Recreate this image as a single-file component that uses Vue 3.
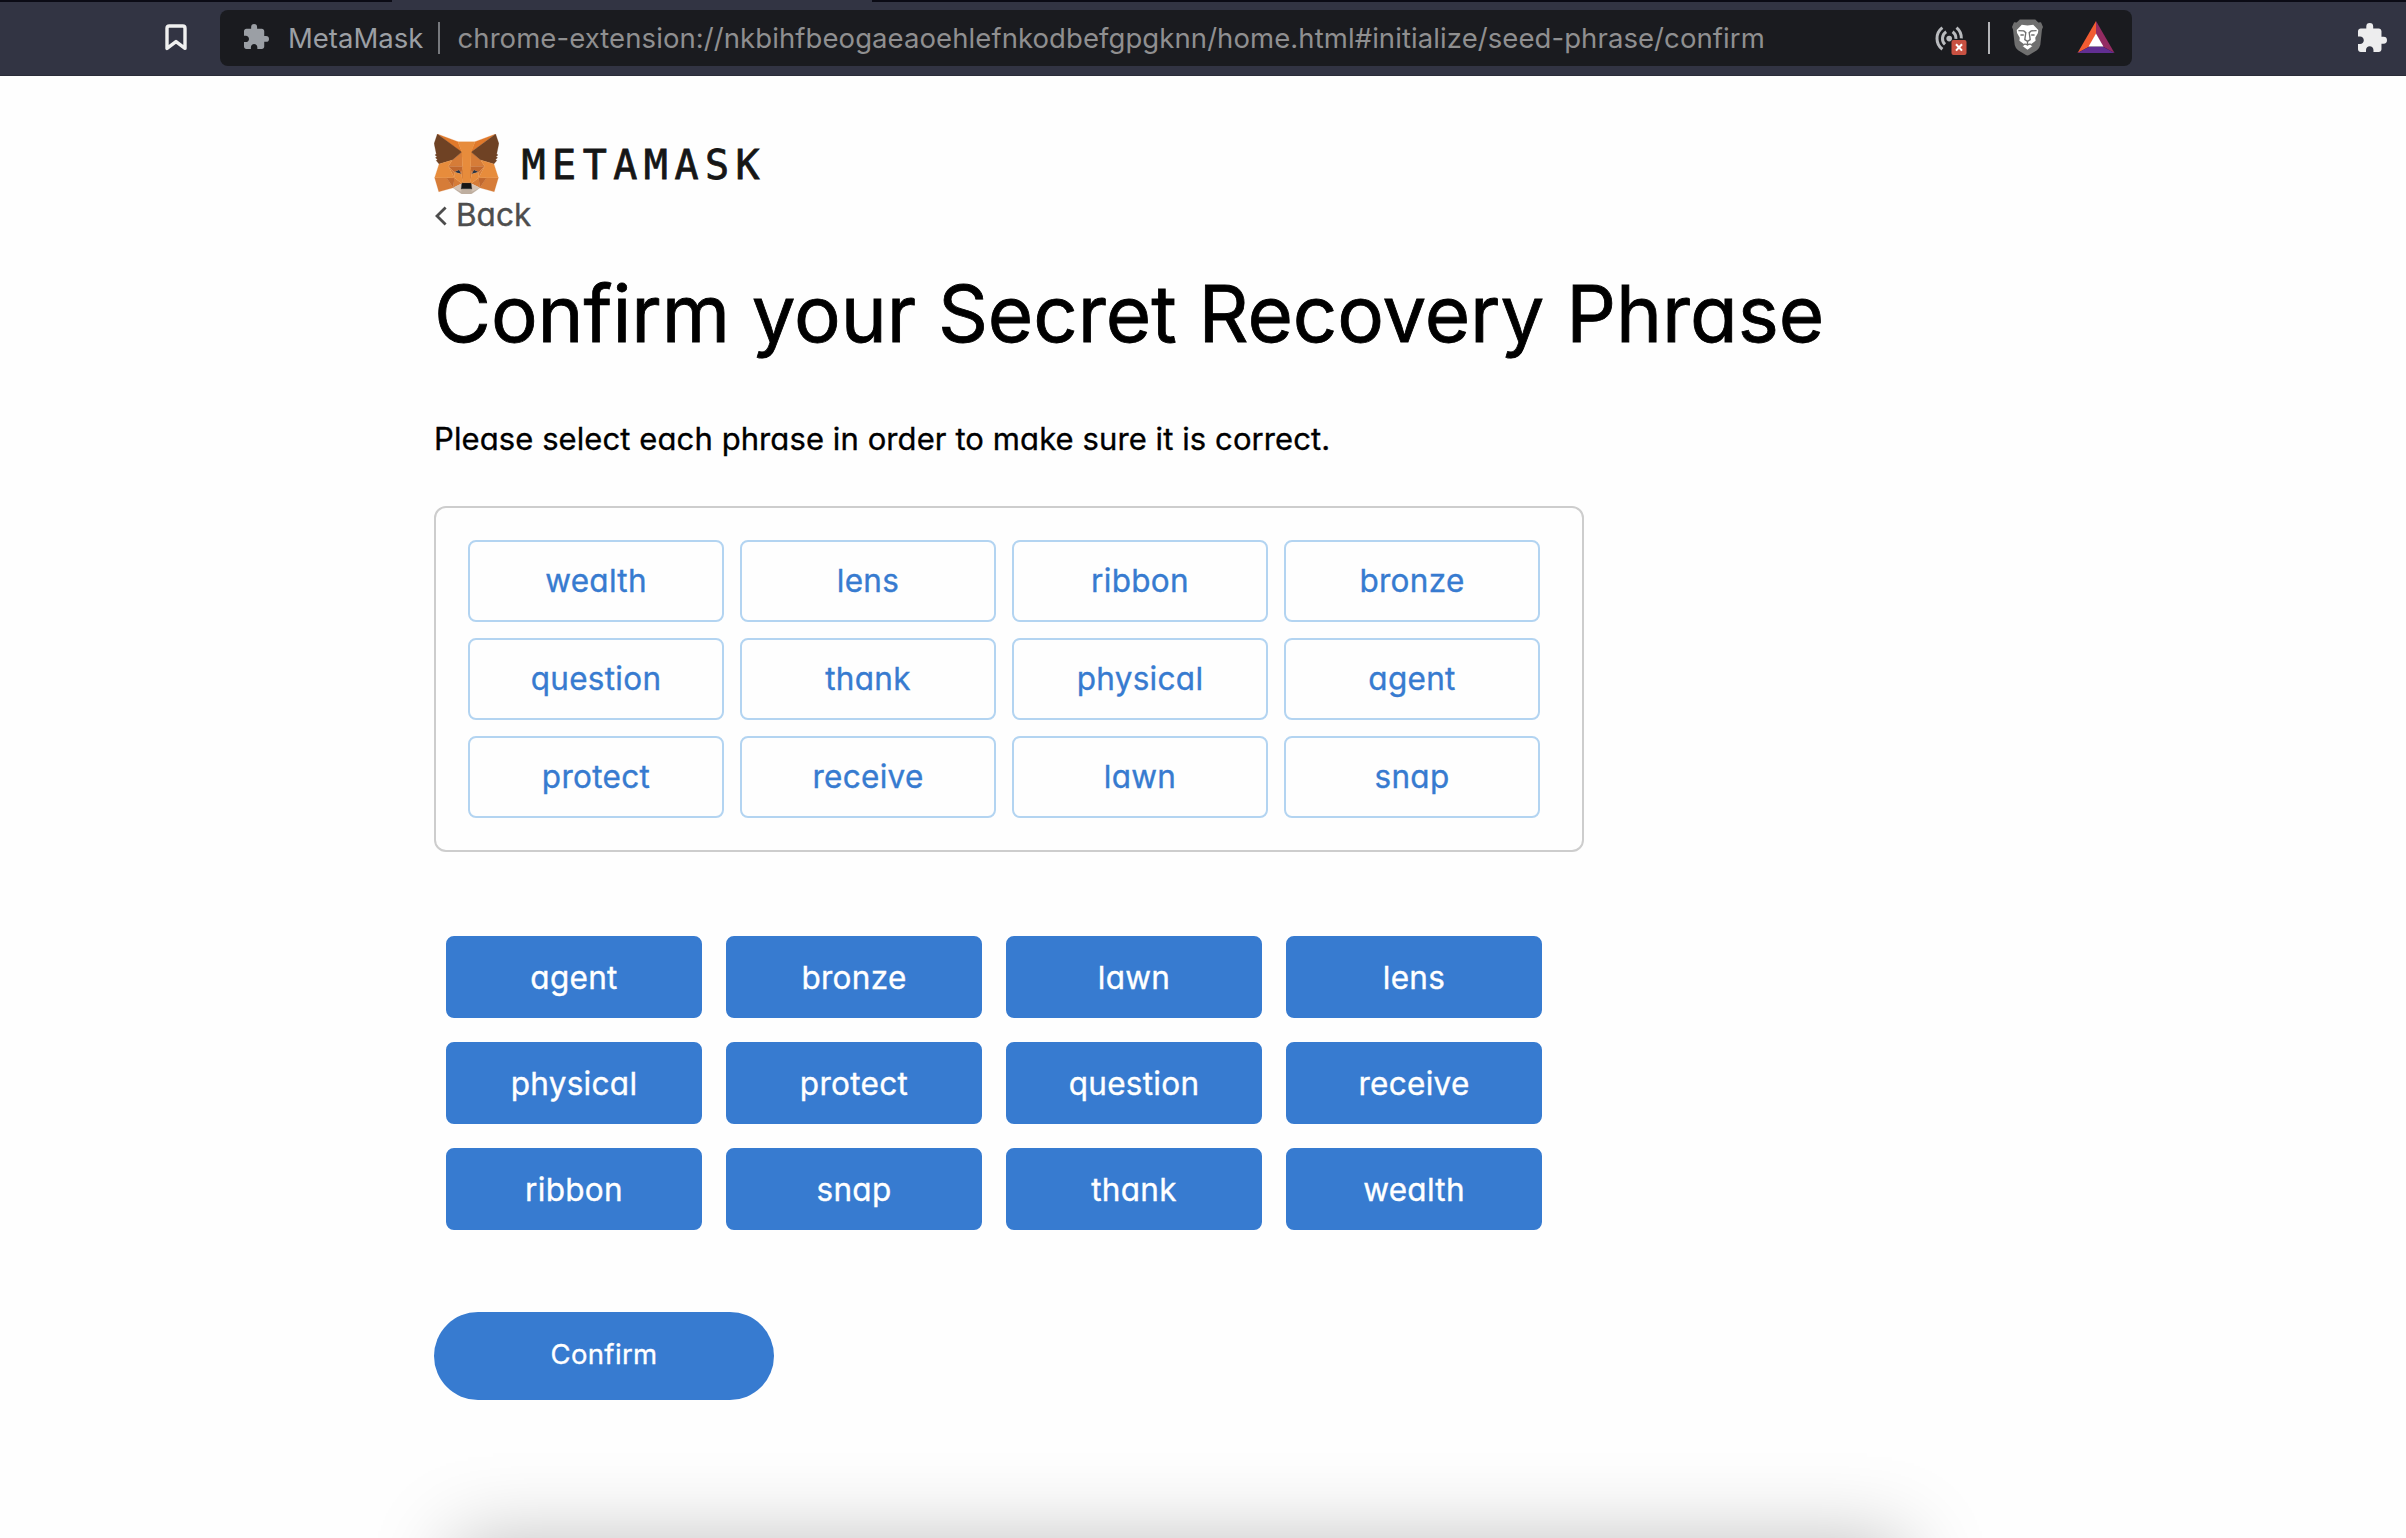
<script setup>
import { ref } from 'vue'

const pageUrl = 'chrome-extension://nkbihfbeogaeaoehlefnkodbefgpgknn/home.html#initialize/seed-phrase/confirm'

const selectedWords = ref([
  'wealth', 'lens', 'ribbon', 'bronze',
  'question', 'thank', 'physical', 'agent',
  'protect', 'receive', 'lawn', 'snap',
])

const sortedWords = ref([
  'agent', 'bronze', 'lawn', 'lens',
  'physical', 'protect', 'question', 'receive',
  'ribbon', 'snap', 'thank', 'wealth',
])

const puzzlePath = 'M20.5 11H19V7c0-1.1-.9-2-2-2h-4V3.5a2.5 2.5 0 0 0-5 0V5H4c-1.1 0-2 .9-2 2v3.8h1.5c1.49 0 2.7 1.21 2.7 2.7S4.99 16.2 3.5 16.2H2V20c0 1.1.9 2 2 2h3.8v-1.5c0-1.49 1.21-2.7 2.7-2.7s2.7 1.21 2.7 2.7V22H17c1.1 0 2-.9 2-2v-4h1.5a2.5 2.5 0 0 0 0-5z'

const foxFacets = [
  ['#e0792b', '274.1,35.5 174.6,109.4 193,65.8'],
  ['#e0792b', '44.4,35.5 143.1,110.1 125.6,65.8'],
  ['#d67c38', '238.3,206.8 211.8,247.4 268.5,263 284.8,207.7'],
  ['#d67c38', '33.9,207.7 50.1,263 106.8,247.4 80.3,206.8'],
  ['#d67c38', '103.6,138.2 87.8,162.1 144.1,164.6 142.1,104.1'],
  ['#d67c38', '214.9,138.2 175.9,103.4 174.6,164.6 230.8,162.1'],
  ['#d67c38', '106.8,247.4 140.6,230.9 111.4,208.1'],
  ['#d67c38', '177.9,230.9 211.8,247.4 207.1,208.1'],
  ['#d5c3b5', '211.8,247.4 177.9,230.9 180.6,253 180.3,262.3'],
  ['#d5c3b5', '106.8,247.4 138.3,262.3 138.1,253 140.6,230.9'],
  ['#263347', '138.8,193.5 110.6,185.2 130.5,176.1'],
  ['#263347', '179.7,193.5 188,176.1 208,185.2'],
  ['#c1682e', '106.8,247.4 111.6,206.8 80.3,207.7'],
  ['#c1682e', '207,206.8 211.8,247.4 238.3,207.7'],
  ['#c1682e', '230.8,162.1 174.6,164.6 179.8,193.5 188.1,176.1 208.1,185.2'],
  ['#c1682e', '110.6,185.2 130.6,176.1 138.8,193.5 144.1,164.6 87.8,162.1'],
  ['#d67c38', '87.8,162.1 111.4,208.1 110.6,185.2'],
  ['#d67c38', '208.1,185.2 207.1,208.1 230.8,162.1'],
  ['#d67c38', '144.1,164.6 138.8,193.5 145.4,227.6 146.9,182.7'],
  ['#d67c38', '174.6,164.6 171.9,182.6 173.1,227.6 179.8,193.5'],
  ['#e78c3c', '179.8,193.5 173.1,227.6 177.9,230.9 207.1,208.1 208.1,185.2'],
  ['#e78c3c', '110.6,185.2 111.4,208.1 140.6,230.9 145.4,227.6 138.8,193.5'],
  ['#beae9f', '180.3,262.3 180.6,253 178.1,250.8 140.4,250.8 138.1,253 138.3,262.3 106.8,247.4 117.8,256.4 140.1,271.9 178.4,271.9 200.8,256.4 211.8,247.4'],
  ['#161616', '177.9,230.9 173.1,227.6 145.4,227.6 140.6,230.9 138.1,253 140.4,250.8 178.1,250.8 180.6,253'],
  ['#6f4224', '278.3,114.2 286.8,73.4 274.1,35.5 177.9,106.9 214.9,138.2 267.2,153.5 278.8,140 273.8,136.4 281.8,129.1 275.6,124.3 283.6,118.2'],
  ['#6f4224', '31.8,73.4 40.3,114.2 34.9,118.2 42.9,124.3 36.8,129.1 44.8,136.4 39.8,140 51.3,153.5 103.6,138.2 140.6,106.9 44.4,35.5'],
  ['#e78c3c', '267.2,153.5 214.9,138.2 230.8,162.1 207.1,208.1 238.3,207.7 284.8,207.7'],
  ['#e78c3c', '103.6,138.2 51.3,153.5 33.9,207.7 80.3,207.7 111.4,208.1 87.8,162.1'],
  ['#e78c3c', '174.6,164.6 177.9,106.9 193.1,65.8 125.6,65.8 140.6,106.9 144.1,164.6 145.3,182.8 145.4,227.6 173.1,227.6 173.3,182.8'],
]
</script>

<template>
  <div class="window">
    <div class="tab-edge"><i class="edge-left"></i><i class="edge-right"></i></div>
    <header class="toolbar">
      <svg class="bookmark" viewBox="0 0 22 27" width="22" height="27">
        <path d="M2 24.4V4.2Q2 2 4.2 2H17.8Q20 2 20 4.2V24.4L11 17.6Z" fill="none" stroke="#f0f0f0" stroke-width="3.4" stroke-linejoin="round" />
      </svg>
      <div class="address">
        <svg class="site-icon" viewBox="2 1 21 21" width="25" height="25"><path :d="puzzlePath" fill="#9b9fa5" /></svg>
        <span class="site">MetaMask</span>
        <span class="bar"></span>
        <span class="url">{{ pageUrl }}</span>
        <svg class="cast" viewBox="0 0 32 32" width="32" height="32">
          <g fill="none" stroke="#b9bbbe" stroke-width="3">
            <path d="M7.4 4.6a13.5 13.5 0 0 0 0 21.6" />
            <path d="M11.2 8.8a8 8 0 0 0-1.2 12.6" />
            <path d="M21.5 4.6a13.5 13.5 0 0 1 4.8 10.8" />
            <path d="M17.6 8.8a8 8 0 0 1 3.3 7" />
          </g>
          <circle cx="14.2" cy="15.6" r="2.8" fill="#b9bbbe" />
          <rect x="16.5" y="17" width="15" height="15" rx="2" fill="#c95142" />
          <path d="M21 21.2l6 6.4M27 21.2l-6 6.4" stroke="#fff" stroke-width="2.1" />
        </svg>
        <span class="bar light"></span>
        <svg class="lion" viewBox="277 29 92 109" width="31" height="37">
          <path d="M300 30h46l9 9 8-1 6 14-3 8-5 46q-2 9-10 15l-22 14q-6 4-12 0l-22-14q-8-6-10-15l-5-46-3-8 6-14 8 1z" fill="#6f6f6f" />
          <path d="M323 48l17-2 15 15-1 9-8 14 1 9-13 10 4 6-15 11-15-11 4-6-13-10 1-9-8-14-1-9 15-15z" fill="#fff" />
          <path d="M296 63l16 1 6 5-3 21 8 5 8-5-3-21 6-5 16-1M302 76l10 0M344 76l-10 0M323 95v9M308 109q6-10 15-3 9-7 15 3" fill="none" stroke="#6f6f6f" stroke-width="4" />
        </svg>
        <svg class="bat" viewBox="0 0 38 33" width="38" height="33">
          <path d="M19 0L.5 32l12-6.6L19 13z" fill="#f15c32" />
          <path d="M19 0l18.5 32-12-6.6L19 13z" fill="#942b62" />
          <path d="M.5 32h37l-12-6.6h-13z" fill="#612e92" />
          <path d="M19 12.5l7.4 13H11.6z" fill="#fff" />
        </svg>
      </div>
      <svg class="extensions" viewBox="2 1 21 21" width="29" height="29"><path :d="puzzlePath" fill="#ededee" /></svg>
    </header>

    <main class="page">
      <div class="logo">
        <svg class="fox" viewBox="31.8 35.5 255 236.4" width="65" height="60">
          <polygon v-for="(facet, i) in foxFacets" :key="i" :points="facet[1]" :fill="facet[0]" :stroke="facet[0]" stroke-width="1" stroke-linejoin="round" />
        </svg>
        <span class="wordmark">METAMASK</span>
      </div>
      <a class="back">
        <svg viewBox="0 0 13 20" width="13" height="20"><path d="M11.6 1.5L3 10l8.6 8.5" fill="none" stroke="#4d4d4d" stroke-width="2.8" /></svg>
        <span>Back</span>
      </a>
      <h1>Confirm your Secret Recovery Phrase</h1>
      <p class="hint">Please select each phrase in order to make sure it is correct.</p>

      <section class="chosen">
        <div v-for="word in selectedWords" :key="word" class="word outlined">{{ word }}</div>
      </section>
      <section class="pool">
        <button v-for="word in sortedWords" :key="word" class="word solid">{{ word }}</button>
      </section>
      <button class="confirm">Confirm</button>
    </main>
    <div class="rising-shadow"></div>
  </div>
</template>

<style>
body {
  margin: 0;
  background: #fff;
}
</style>

<style scoped>
.window {
  position: relative;
  display: flex;
  flex-direction: column;
  height: 1538px;
  overflow: hidden;
  background: #fefefe;
  font-family: Inter, "Liberation Sans", sans-serif;
}
.tab-edge {
  display: flex;
  justify-content: space-between;
  height: 2px;
  flex: none;
  background: #323443;
}
.edge-left {
  width: 392px;
  background: #0b0b15;
}
.edge-right {
  width: 1534px;
  background: #0b0b15;
}
.toolbar {
  box-sizing: border-box;
  flex: none;
  display: flex;
  align-items: center;
  height: 74px;
  padding: 0 19px 2px 165px;
  background: #323443;
  border-bottom: 1px solid #2a2c38;
}
.bookmark {
  margin-right: 33px;
}
.address {
  display: flex;
  align-items: center;
  width: 1912px;
  height: 56px;
  margin-right: auto;
  border-radius: 8px;
  background: #1a1b1f;
  font-size: 27.5px;
  line-height: 40px;
  white-space: nowrap;
}
.site-icon {
  margin: 0 19px 2px 24px;
}
.site {
  width: 150px;
  color: #9b9fa4;
}
.bar {
  width: 2px;
  height: 32px;
  background: #77797d;
}
.bar.light {
  background: #b4b5b8;
}
.url {
  margin-left: 17.5px;
  letter-spacing: 0.08px;
  color: #8f8f90;
}
.cast {
  margin: 2px 21px 0 auto;
}
.lion {
  margin-left: 22px;
}
.bat {
  margin: 0 17px 0 34px;
}
.extensions {
  margin-bottom: 1px;
}
.page {
  display: flex;
  flex-direction: column;
  align-items: flex-start;
  padding: 58px 0 0 434px;
  font-feature-settings: "cv11";
  -webkit-text-stroke: 0.35px currentColor;
}
.logo {
  display: flex;
  align-items: center;
  height: 60px;
}
.wordmark {
  margin-left: 22.5px;
  padding-top: 1px;
  font: 40px/60px "DejaVu Sans Mono", monospace;
  letter-spacing: 6.5px;
  color: #161616;
  -webkit-text-stroke: 0.8px #161616;
}
.back {
  display: flex;
  align-items: center;
  height: 40px;
  color: #4d4d4d;
  font-size: 31.5px;
}
.back svg {
  margin: 3px 9px 0 0;
}
h1 {
  margin: 21px 0 0;
  font-size: 78px;
  font-weight: 400;
  line-height: 117px;
  letter-spacing: -0.08px;
  color: #000;
  -webkit-text-stroke: 0.8px #000;
}
.hint {
  margin: 43px 0 0;
  font-size: 31px;
  line-height: 48px;
  letter-spacing: 0.09px;
  color: #000;
}
.chosen {
  box-sizing: border-box;
  display: grid;
  grid-template-columns: repeat(4, 256px);
  gap: 16px;
  width: 1150px;
  margin-top: 43px;
  padding: 32px;
  border: 2px solid #cdcdcd;
  border-radius: 12px;
}
.pool {
  display: grid;
  grid-template-columns: repeat(4, 256px);
  gap: 24px;
  margin: 84px 0 0 12px;
}
.word {
  box-sizing: border-box;
  height: 82px;
  padding: 0;
  border-radius: 8px;
  font-family: inherit;
  font-size: 31.5px;
  font-weight: 400;
  line-height: 77px;
  letter-spacing: 0.3px;
  text-align: center;
  font-feature-settings: inherit;
}
.outlined {
  border: 2px solid #b3d4f1;
  color: #377bd0;
}
.solid {
  border: 2px solid #377bd0;
  background: #377bd0;
  color: #fff;
}
.confirm {
  width: 340px;
  height: 88px;
  margin-top: 82px;
  padding: 0 0 4px;
  border: 0;
  border-radius: 44px;
  background: #377bd0;
  color: #fff;
  font-family: inherit;
  font-size: 27.5px;
  letter-spacing: 0.35px;
  font-feature-settings: inherit;
}
/* Shadow cast by a sheet resting just below the visible area */
.rising-shadow {
  position: absolute;
  left: 455px;
  top: 1540px;
  width: 1450px;
  height: 300px;
  box-shadow: 0 0 76px rgba(0, 0, 0, 0.25);
}
</style>
